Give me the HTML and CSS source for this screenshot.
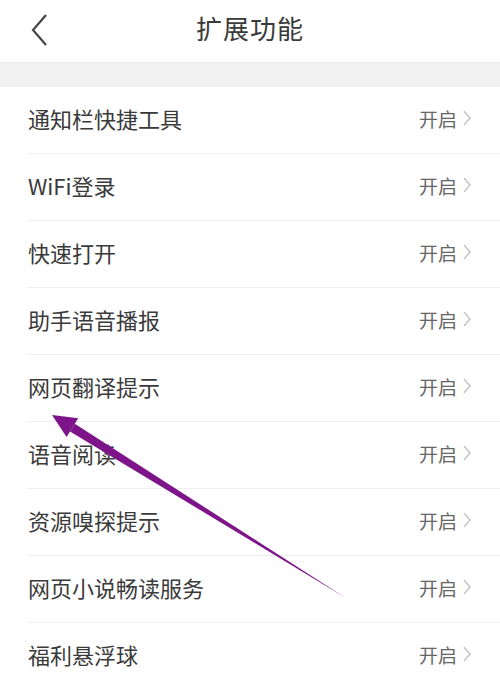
FILE: index.html
```html
<!DOCTYPE html>
<html lang="zh">
<head>
<meta charset="utf-8">
<link rel="stylesheet" href="styles.css">
</head>
<body>
<div class="page">
  <header class="topbar">
    <svg class="back" width="20" height="34" viewBox="0 0 20 34"><polyline points="16,2 3,17 16,32" fill="none" stroke="#444" stroke-width="2.2"/></svg>
    <h1 class="title">扩展功能</h1>
  </header>
  <div class="band"></div>
  <ul class="list">
    <li class="row"><span class="label">通知栏快捷工具</span><span class="state">开启<svg class="chev" width="10" height="16" viewBox="0 0 10 16"><polyline points="2,1 8,8 2,15" fill="none" stroke="#c4c4c4" stroke-width="1.5"/></svg></span></li>
    <li class="row"><span class="label">WiFi登录</span><span class="state">开启<svg class="chev" width="10" height="16" viewBox="0 0 10 16"><polyline points="2,1 8,8 2,15" fill="none" stroke="#c4c4c4" stroke-width="1.5"/></svg></span></li>
    <li class="row"><span class="label">快速打开</span><span class="state">开启<svg class="chev" width="10" height="16" viewBox="0 0 10 16"><polyline points="2,1 8,8 2,15" fill="none" stroke="#c4c4c4" stroke-width="1.5"/></svg></span></li>
    <li class="row"><span class="label">助手语音播报</span><span class="state">开启<svg class="chev" width="10" height="16" viewBox="0 0 10 16"><polyline points="2,1 8,8 2,15" fill="none" stroke="#c4c4c4" stroke-width="1.5"/></svg></span></li>
    <li class="row"><span class="label">网页翻译提示</span><span class="state">开启<svg class="chev" width="10" height="16" viewBox="0 0 10 16"><polyline points="2,1 8,8 2,15" fill="none" stroke="#c4c4c4" stroke-width="1.5"/></svg></span></li>
    <li class="row"><span class="label">语音阅读</span><span class="state">开启<svg class="chev" width="10" height="16" viewBox="0 0 10 16"><polyline points="2,1 8,8 2,15" fill="none" stroke="#c4c4c4" stroke-width="1.5"/></svg></span></li>
    <li class="row"><span class="label">资源嗅探提示</span><span class="state">开启<svg class="chev" width="10" height="16" viewBox="0 0 10 16"><polyline points="2,1 8,8 2,15" fill="none" stroke="#c4c4c4" stroke-width="1.5"/></svg></span></li>
    <li class="row"><span class="label">网页小说畅读服务</span><span class="state">开启<svg class="chev" width="10" height="16" viewBox="0 0 10 16"><polyline points="2,1 8,8 2,15" fill="none" stroke="#c4c4c4" stroke-width="1.5"/></svg></span></li>
    <li class="row"><span class="label">福利悬浮球</span><span class="state">开启<svg class="chev" width="10" height="16" viewBox="0 0 10 16"><polyline points="2,1 8,8 2,15" fill="none" stroke="#c4c4c4" stroke-width="1.5"/></svg></span></li>
  </ul>
  <svg class="annot" width="500" height="686" viewBox="0 0 500 686">
    <polygon points="52,415 78.2,418.3 66.6,436.9" fill="#7d1489"/>
    <polygon points="74.8,423.8 70,431.4 345,597.5" fill="#7d1489"/>
  </svg>
</div>
</body>
</html>
```
FILE: styles.css
```css
html, body {
  margin: 0;
  padding: 0;
  background: #fff;
}
body {
  width: 500px;
  height: 686px;
  overflow: hidden;
  font-family: "Noto Sans CJK SC", "Noto Sans", sans-serif;
}
.page {
  position: relative;
  width: 500px;
  height: 686px;
}
.topbar {
  position: relative;
  height: 62px;
  box-sizing: border-box;
  padding-bottom: 6px;
  display: flex;
  align-items: center;
  justify-content: center;
  background: #fff;
}
.back {
  position: absolute;
  left: 30px;
  top: 13px;
}
.title {
  margin: 0;
  font-size: 26px;
  line-height: 1;
  font-weight: 400;
  color: #3a3a3a;
  letter-spacing: 1px;
}
.band {
  height: 25px;
  background: #f1f1f1;
  border-top: 1px solid #ececec;
  box-sizing: border-box;
}
.list {
  list-style: none;
  margin: 0;
  padding: 0 0 0 27px;
}
.row {
  height: 66px;
  box-sizing: content-box;
  border-bottom: 1px solid #efefef;
  display: flex;
  align-items: center;
  justify-content: space-between;
  padding-right: 28px;
}
.label {
  font-size: 22px;
  line-height: 1;
  color: #3a3a3a;
  padding-left: 1px;
  padding-bottom: 4px;
}
.state {
  display: flex;
  align-items: center;
  gap: 5px;
  font-size: 19px;
  line-height: 1;
  color: #666;
  padding-bottom: 4px;
}
.chev {
  display: block;
}
.annot {
  position: absolute;
  left: 0;
  top: 0;
  pointer-events: none;
}
```
